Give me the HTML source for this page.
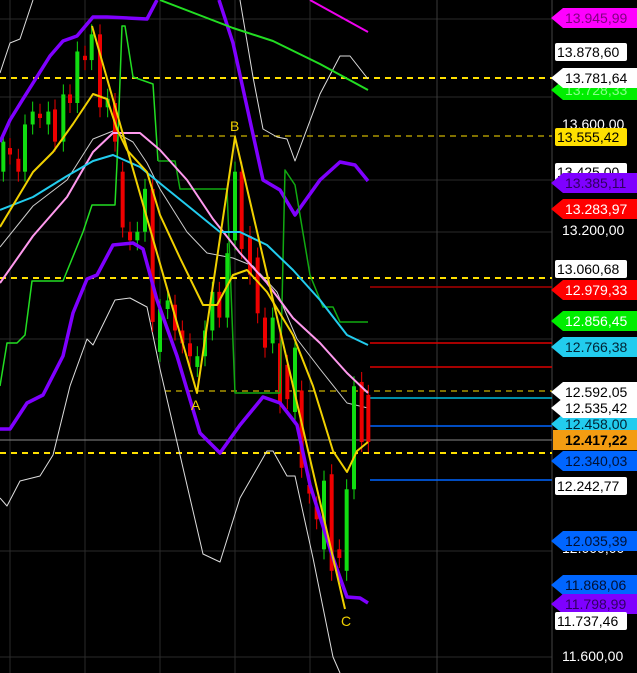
<!DOCTYPE html><html><head><style>
body{margin:0;background:#000;width:637px;height:673px;overflow:hidden;font-family:"Liberation Sans",Arial,sans-serif}
svg{position:absolute;left:0;top:0}
</style></head><body>
<svg id="s" width="637" height="673" viewBox="0 0 637 673">
<rect width="637" height="673" fill="#000"/>
<g stroke="#2a2a2a" stroke-width="1">
<line x1="10" y1="0" x2="10" y2="673"/><line x1="85" y1="0" x2="85" y2="673"/><line x1="160" y1="0" x2="160" y2="673"/><line x1="235" y1="0" x2="235" y2="673"/><line x1="310" y1="0" x2="310" y2="673"/>
<line x1="0" y1="19" x2="552" y2="19"/><line x1="0" y1="97" x2="552" y2="97"/><line x1="0" y1="180" x2="552" y2="180"/><line x1="0" y1="232" x2="552" y2="232"/><line x1="0" y1="339" x2="552" y2="339"/><line x1="0" y1="551" x2="552" y2="551"/><line x1="0" y1="657" x2="552" y2="657"/>
</g>
<line x1="437" y1="0" x2="437" y2="673" stroke="#3a3a3a"/>
<line x1="552" y1="0" x2="552" y2="673" stroke="#444"/>
<line x1="0" y1="440" x2="552" y2="440" stroke="#888"/>
<g stroke="#ffe000" stroke-width="2" stroke-dasharray="6,5" fill="none">
<line x1="0" y1="78" x2="552" y2="78"/><line x1="0" y1="278" x2="552" y2="278"/><line x1="0" y1="453" x2="552" y2="453"/>
<line x1="175" y1="136" x2="552" y2="136" stroke-width="1"/><line x1="165" y1="391" x2="552" y2="391" stroke-width="1"/>
</g>
<g stroke-width="1.5">
<line x1="370" y1="287" x2="552" y2="287" stroke="#a00"/>
<line x1="370" y1="343" x2="552" y2="343" stroke="#d00"/>
<line x1="370" y1="367" x2="552" y2="367" stroke="#d00"/>
<line x1="370" y1="398" x2="552" y2="398" stroke="#0bd"/>
<line x1="370" y1="426" x2="552" y2="426" stroke="#06f"/>
<line x1="370" y1="480" x2="552" y2="480" stroke="#06f"/>
</g>
<g fill="none" stroke-linejoin="round">
<polyline stroke="#ddd" stroke-width="1" points="0,73 10,43 20,39 33,0"/>
<polyline stroke="#ddd" stroke-width="1" points="240,0 253,77 263,129 277,137 287,139 295,161 320,94 340,56 350,56 368,79"/>
<polyline stroke="#ddd" stroke-width="1" points="0,498 7,506 20,481 40,476 53,455 70,386 87,339 93,345 115,300 130,298 147,307 160,369 180,455 203,554 220,562 240,498 267,451 273,451 287,476 295,476 313,558 333,657 340,673"/>
<polyline stroke="#ccc" stroke-width="1" points="0,247 33,206 67,180 93,139 113,131 133,142 147,163 160,189 187,232 207,253 233,258 253,266 277,292 297,339 320,369 347,403 368,408"/>
</g>
<g id="c"></g>
<g fill="none" stroke-linejoin="round">
<polyline stroke="#7f00ff" stroke-width="3.5" points="0,142 10,120 23,99 50,56 63,41 77,36 93,17 107,17 147,19 157,0"/>
<polyline stroke="#7f00ff" stroke-width="3.5" points="219,0 233,43 247,107 263,180 280,190 295,215 320,180 340,162 355,165 368,181"/>
<polyline stroke="#7f00ff" stroke-width="3.5" points="0,429 10,429 27,403 43,395 63,356 73,313 87,279 97,275 113,245 133,243 143,249 157,300 177,356 200,433 220,453 240,425 263,397 280,403 297,425 310,485 333,558 347,597 360,598 368,603"/>
<polyline stroke="#2d2" stroke-width="1.5" points="0,386 7,343 17,343 25,335 32,281 63,281 83,232 92,205 115,205 117,163 122,26 125,26 133,77 153,84 158,161"/>
<polyline stroke="#1a1" stroke-width="1.5" points="158,161 175,161 180,189 227,189 235,393 280,393 285,170 295,185 310,275 323,307 333,307 340,322 368,322"/>
<polyline stroke="#22dd22" stroke-width="2" points="160,0 233,28 273,41 320,64 368,90"/>
<polyline stroke="#e0e" stroke-width="2" points="310,0 368,32"/>
<polyline stroke="#ff99ee" stroke-width="2" points="0,283 33,236 67,197 93,152 113,133 140,133 160,150 187,180 213,219 240,253 267,283 293,318 320,343 347,373 368,393"/>
<polyline stroke="#22ccee" stroke-width="2" points="0,210 33,197 67,176 93,161 113,155 140,167 167,189 193,210 220,232 240,232 267,245 293,270 320,300 347,335 368,345"/>
<polyline stroke="#f0d000" stroke-width="2" points="0,227 33,172 53,152 73,124 93,94 107,99 117,129 127,150 147,172 160,215 180,258 203,305 217,305 233,275 247,270 267,292 293,335 313,386 333,451 347,472 357,451 368,442"/>
<polyline stroke="#f0d000" stroke-width="2" points="92,26 197,393 235,137 345,609"/>
</g>
<g fill="#f0d000" font-size="14"><text x="191" y="410">A</text><text x="230" y="131">B</text><text x="341" y="626">C</text></g>
<g id="L" font-size="14"></g>
</svg>
<script>
var c=document.getElementById('c'),ns='http://www.w3.org/2000/svg';
var cs=[[10,'g',330,400],[30,'r',345,360],[55,'r',370,400],[75,'g',290,400],[98,'g',260,290],[120,'r',265,275],[145,'g',260,290],[165,'r',255,330],[190,'g',220,330],[210,'r',220,240],[232,'g',120,240],[255,'r',130,140],[275,'g',80,140],[300,'r',80,250],[323,'g',230,250],[345,'r',240,330],[368,'r',400,530],[390,'r',540,560],[412,'g',540,560],[435,'g',440,540],[458,'r',440,750],[480,'g',720,820],[503,'g',700,720],[525,'r',710,770],[547,'r',770,800],[570,'r',800,830],[592,'g',830,855],[615,'g',770,830],[637,'g',680,770],[658,'r',680,740],[682,'g',590,740],[705,'g',400,560],[725,'r',400,580],[750,'r',550,640],[773,'r',600,730],[795,'r',740,810],[818,'g',740,800],[840,'r',800,940],[862,'r',850,930],[885,'g',810,960],[905,'r',910,1090],[928,'r',1130,1150],[950,'r',1180,1210],[972,'g',1120,1280],[995,'r',1105,1330],[1018,'r',1280,1300],[1040,'g',1140,1330],[1062,'g',900,1140],[1085,'r',890,1030],[1105,'r',920,1030]];
cs.forEach(function(k){var x=k[0]/3,t=k[2]/2.33,b=k[3]/2.33,col=k[1]=='g'?'#1d1':'#e00';
var w=document.createElementNS(ns,'line');w.setAttribute('x1',x);w.setAttribute('x2',x);w.setAttribute('y1',t-10);w.setAttribute('y2',b+10);w.setAttribute('stroke',col);c.appendChild(w);
var r=document.createElementNS(ns,'rect');r.setAttribute('x',x-2);r.setAttribute('y',t);r.setAttribute('width',4);r.setAttribute('height',Math.max(3,b-t));r.setAttribute('fill',col);c.appendChild(r);});
var L=document.getElementById('L');
var labs=[[18,'a','#f0f','#800080','13.945,99'],[52,'b','#fff','#000','13.878,60'],[90,'a','#0e0','#8f8','13.728,33'],[78,'a','#fff','#000','13.781,64'],[124,'t','','#fff','13.600,00'],[137,'b','#ffe000','#000','13.555,42'],[172,'b','#fff','#000','13.425,00'],[183,'a','#7f00ff','#300060','13.385,11'],[209,'a','#f00','#fff','13.283,97'],[230,'t','','#fff','13.200,00'],[269,'b','#fff','#000','13.060,68'],[290,'a','#f00','#fff','12.979,33'],[321,'a','#0e0','#fff','12.856,45'],[347,'a','#2ce','#023','12.766,38'],[424,'a','#2ce','#023','12.458,00'],[392,'a','#fff','#000','12.592,05'],[408,'a','#fff','#000','12.535,42'],[461,'a','#06f','#013','12.340,03'],[440,'o','#f39c12','#000','12.417,22'],[486,'b','#fff','#000','12.242,77'],[548,'t','','#fff','12.000,00'],[541,'a','#06f','#013','12.035,39'],[585,'a','#06f','#013','11.868,06'],[604,'a','#7f00ff','#300060','11.798,99'],[621,'b','#fff','#000','11.737,46'],[656,'t','','#fff','11.600,00']];
labs.forEach(function(l){var y=l[0],k=l[1];
if(k=='a'){var p=document.createElementNS(ns,'polygon');p.setAttribute('points','551,'+y+' 563,'+(y-10)+' 637,'+(y-10)+' 637,'+(y+10)+' 563,'+(y+10));p.setAttribute('fill',l[2]);L.appendChild(p);}
else if(k=='b'){var p=document.createElementNS(ns,'rect');p.setAttribute('x',555);p.setAttribute('y',y-9);p.setAttribute('width',72);p.setAttribute('height',18);p.setAttribute('rx',2);p.setAttribute('fill',l[2]);L.appendChild(p);}
else if(k=='o'){var p=document.createElementNS(ns,'rect');p.setAttribute('x',553);p.setAttribute('y',y-10);p.setAttribute('width',84);p.setAttribute('height',20);p.setAttribute('fill',l[2]);L.appendChild(p);}
var t=document.createElementNS(ns,'text');t.setAttribute('x',k=='t'?562:(k=='b'?557:565));t.setAttribute('y',y+5);t.setAttribute('fill',l[3]);if(k=='o')t.setAttribute('font-weight','bold');t.textContent=l[4];L.appendChild(t);});
</script>
</body></html>
